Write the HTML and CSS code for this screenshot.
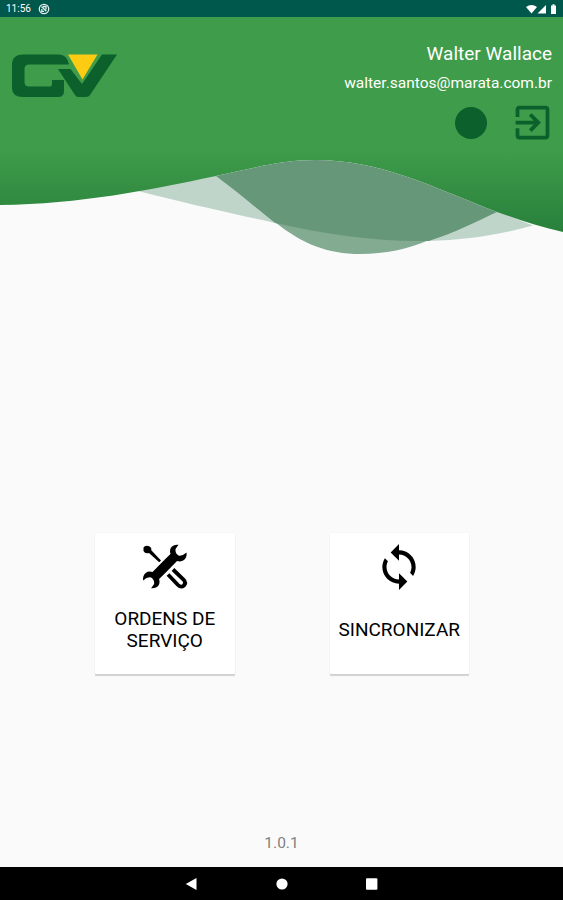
FILE: index.html
```
<!DOCTYPE html>
<html lang="pt-BR">
<head>
  <meta charset="UTF-8">
  <meta name="viewport" content="width=device-width, initial-scale=1">
  <title>GV</title>
  <link rel="stylesheet" href="styles.css">
</head>
<body>
  <div class="status-bar">
    <div class="status-left">
      <span class="clock">11:56</span>
      <svg class="status-app" viewBox="0 0 12 12">
        <circle cx="6" cy="6" r="4.7"/>
        <path d="M3.5 3.5l4.8 4.8M5 3.5h3v3M3.8 6v2.3H6"/>
      </svg>
    </div>
    <svg class="status-right" viewBox="0 0 34 12">
      <path d="M2 4Q7.500 0 13 4L7.500 10.500z"/>
      <path d="M13.500 10.500L22 2V10.500z"/>
      <path d="M27 2.500h1.500V1.300h2V2.500H32v8.500H27z"/>
    </svg>
  </div>

  <header class="header">
    <svg class="waves" viewBox="0 17 563 243">
      <defs>
        <linearGradient id="green" x1="0" y1="17" x2="0" y2="232" gradientUnits="userSpaceOnUse">
          <stop offset="0" stop-color="#3f9c4a"/>
          <stop offset="0.620" stop-color="#3f9c4a"/>
          <stop offset="1" stop-color="#28803b"/>
        </linearGradient>
      </defs>
      <path fill="#c0d5ca" d="M138 190C164 186 190 181 216 175L275 223C230 213 180 202 138 191z"/>
      <path fill="#c0d5ca" d="M497 211L533 225.500C500 235 465 240 429 241C455 233 475 222 497 211z"/>
      <path fill="#82ab91" d="M275 222C302 244 328 254 360 254C385 254 408 249 429 240C375 241 325 233 275 222z"/>
      <path fill="url(#green)" d="M0 17H563V232C540 227 520 220 497 212C430 186 380 160 315 160C280 160 250 169 216 176C150 190 80 204 0 205z"/>
      <path fill="#669779" d="M216 176C250 169 280 160 315 160C380 160 430 186 497 212C475 222 455 233 429 241C375 242 325 234 275 223C255 207 236 191 216 176z"/>
    </svg>
    <div class="header-content">
      <svg class="logo" viewBox="0 0 106 44">
        <path fill="#0b602b" d="M11 0.500H47Q55 0.500 57 10.500H17Q12.500 10.500 12.500 15V28Q12.500 32.500 17 32.500H38Q40 32.500 40 30V26H52V37Q52 43 46 43H11Q0 43 0 34V11Q0 0.500 11 0.500z"/>
        <path fill="#0b602b" d="M46 15H58.500L70 30L90 0.500H105L78 41Q76.500 43 74 43H66Q64.500 43 63 41z"/>
        <path fill="#fdcb12" d="M56 0.500H85.500L70.500 25.500z"/>
      </svg>
      <div class="user">
        <div class="user-name">Walter Wallace</div>
        <div class="user-email">walter.santos@marata.com.br</div>
        <div class="user-actions">
          <span class="dot"></span>
          <svg class="exit" viewBox="0 0 24 24">
            <path d="M10.090 15.590L11.500 17l5-5-5-5-1.410 1.410L12.670 11H3v2h9.670l-2.580 2.590zM19 3H5c-1.110 0-2 .9-2 2v4h2V5h14v14H5v-4H3v4c0 1.100.890 2 2 2h14c1.100 0 2-.9 2-2V5c0-1.100-.9-2-2-2z"/>
          </svg>
        </div>
      </div>
    </div>
  </header>

  <main class="menu">
    <button class="card">
      <svg class="card-icon" viewBox="0 0 50 50">
        <!-- screwdriver -->
        <path d="M3.500 5.500Q5 3 8.500 4Q12 5.500 11.300 8.300L21 18.500L19.200 20.300L9 11Q5 12 3.500 9z"/>
        <path d="M28 32.500L38 43Q41 46 44 43.500Q46.500 40.500 43.500 37.500L33 27.500" fill="none" stroke="#000" stroke-width="3.800"/>
        <!-- wrench, one jaw at each end -->
        <path d="M14 35L35.500 14" stroke="#000" stroke-width="8.500"/>
        <path d="M24.800 17.500L30.500 12Q29 7 32 4.500Q34.500 2.200 38.500 2.800L35.500 7Q35 11.500 38.500 13.500Q42 14.500 46.500 10.500Q47.200 15 44 18Q41 20.300 37 19L24.800 31.500z"/>
        <path transform="rotate(180 24.800 24.500)" d="M24.800 17.500L30.500 12Q29 7 32 4.500Q34.500 2.200 38.500 2.800L35.500 7Q35 11.500 38.500 13.500Q42 14.500 46.500 10.500Q47.200 15 44 18Q41 20.300 37 19L24.800 31.500z"/>
      </svg>
      <span class="card-label">ORDENS DE SERVIÇO</span>
    </button>
    <button class="card">
      <svg class="card-icon" viewBox="0 0 24 24">
        <path d="M12 4V1L8 5l4 4V6c3.310 0 6 2.690 6 6 0 1.010-.250 1.970-.7 2.800l1.460 1.460C19.540 15.030 20 13.570 20 12c0-4.420-3.580-8-8-8zm0 14c-3.310 0-6-2.690-6-6 0-1.010.250-1.970.7-2.800L5.240 7.740C4.460 8.970 4 10.430 4 12c0 4.420 3.580 8 8 8v3l4-4-4-4v3z"/>
      </svg>
      <span class="card-label">SINCRONIZAR</span>
    </button>
  </main>

  <footer class="version">1.0.1</footer>

  <nav class="nav-bar">
    <svg viewBox="0 0 14 14"><path d="M0.800 7L11.500 1V13z"/></svg>
    <svg viewBox="0 0 14 14"><circle cx="7" cy="7" r="5.600"/></svg>
    <svg viewBox="0 0 14 14"><rect x="1" y="1.300" width="11.400" height="11.400" rx="1"/></svg>
  </nav>
</body>
</html>
```
FILE: styles.css
```
/* Global Reset */
* { box-sizing: border-box; }
html, body { margin: 0; padding: 0; overflow: hidden; }

body {
  display: flex;
  flex-direction: column;
  height: 100vh;
  background: #fafafa;
  color: #000;
  font-family: Roboto, sans-serif;
}

svg { display: block; }

/* Status bar */
.status-bar {
  display: flex;
  justify-content: space-between;
  align-items: center;
  height: 17px;
  padding: 1px 5px 0 6px;
  background: #00574b;
}
.status-left { display: flex; align-items: center; gap: 7px; }
.clock { color: #fff; font-size: 10px; line-height: 16px; }
.status-app { width: 12px; height: 12px; fill: none; stroke: #e4efed; stroke-width: 1.3; }
.status-right { width: 34px; height: 12px; fill: #fff; }

/* Header */
.header { position: relative; height: 243px; }
.waves { position: absolute; top: 0; left: 0; width: 563px; height: 243px; }
.header-content {
  position: relative;
  display: flex;
  justify-content: space-between;
  padding: 25px 11px 0 12px;
}
.logo { width: 106px; height: 44px; margin-top: 12px; }
.user { color: #fff; text-align: right; }
.user-name { font-size: 19px; line-height: 24px; }
.user-email { margin-top: 7px; font-size: 15.5px; line-height: 20px; }
.user-actions {
  display: flex;
  justify-content: flex-end;
  align-items: center;
  gap: 23px;
  margin: 7px -3px 0 0;
}
.dot { width: 32px; height: 32px; border-radius: 50%; background: #0b602b; }
.exit { width: 45px; height: 45px; fill: #0b602b; }

/* Menu */
.menu {
  display: flex;
  flex: 1;
  gap: 95px;
  padding: 273px 0 0 95px;
}
.card {
  display: flex;
  flex-direction: column;
  align-items: center;
  width: 139.5px;
  height: 141px;
  padding: 9px 0 0;
  border: none;
  border-radius: 1px;
  background: #fff;
  box-shadow: 0 2px 1px rgba(0,0,0,0.16), 0 0 2px rgba(0,0,0,0.06);
  color: #000;
  font-family: inherit;
}
.card-icon { width: 50px; height: 50px; }
.card-label {
  display: flex;
  flex: 1;
  align-items: center;
  padding-bottom: 6px;
  font-size: 19px;
  line-height: 22px;
}

/* Footer */
.version {
  height: 36px;
  color: #808080;
  font-size: 15.5px;
  line-height: 25px;
  text-align: center;
}
.nav-bar {
  display: flex;
  justify-content: center;
  align-items: center;
  gap: 76px;
  height: 33px;
  background: #000;
}
.nav-bar svg { width: 14px; height: 14px; fill: #fff; }
```
